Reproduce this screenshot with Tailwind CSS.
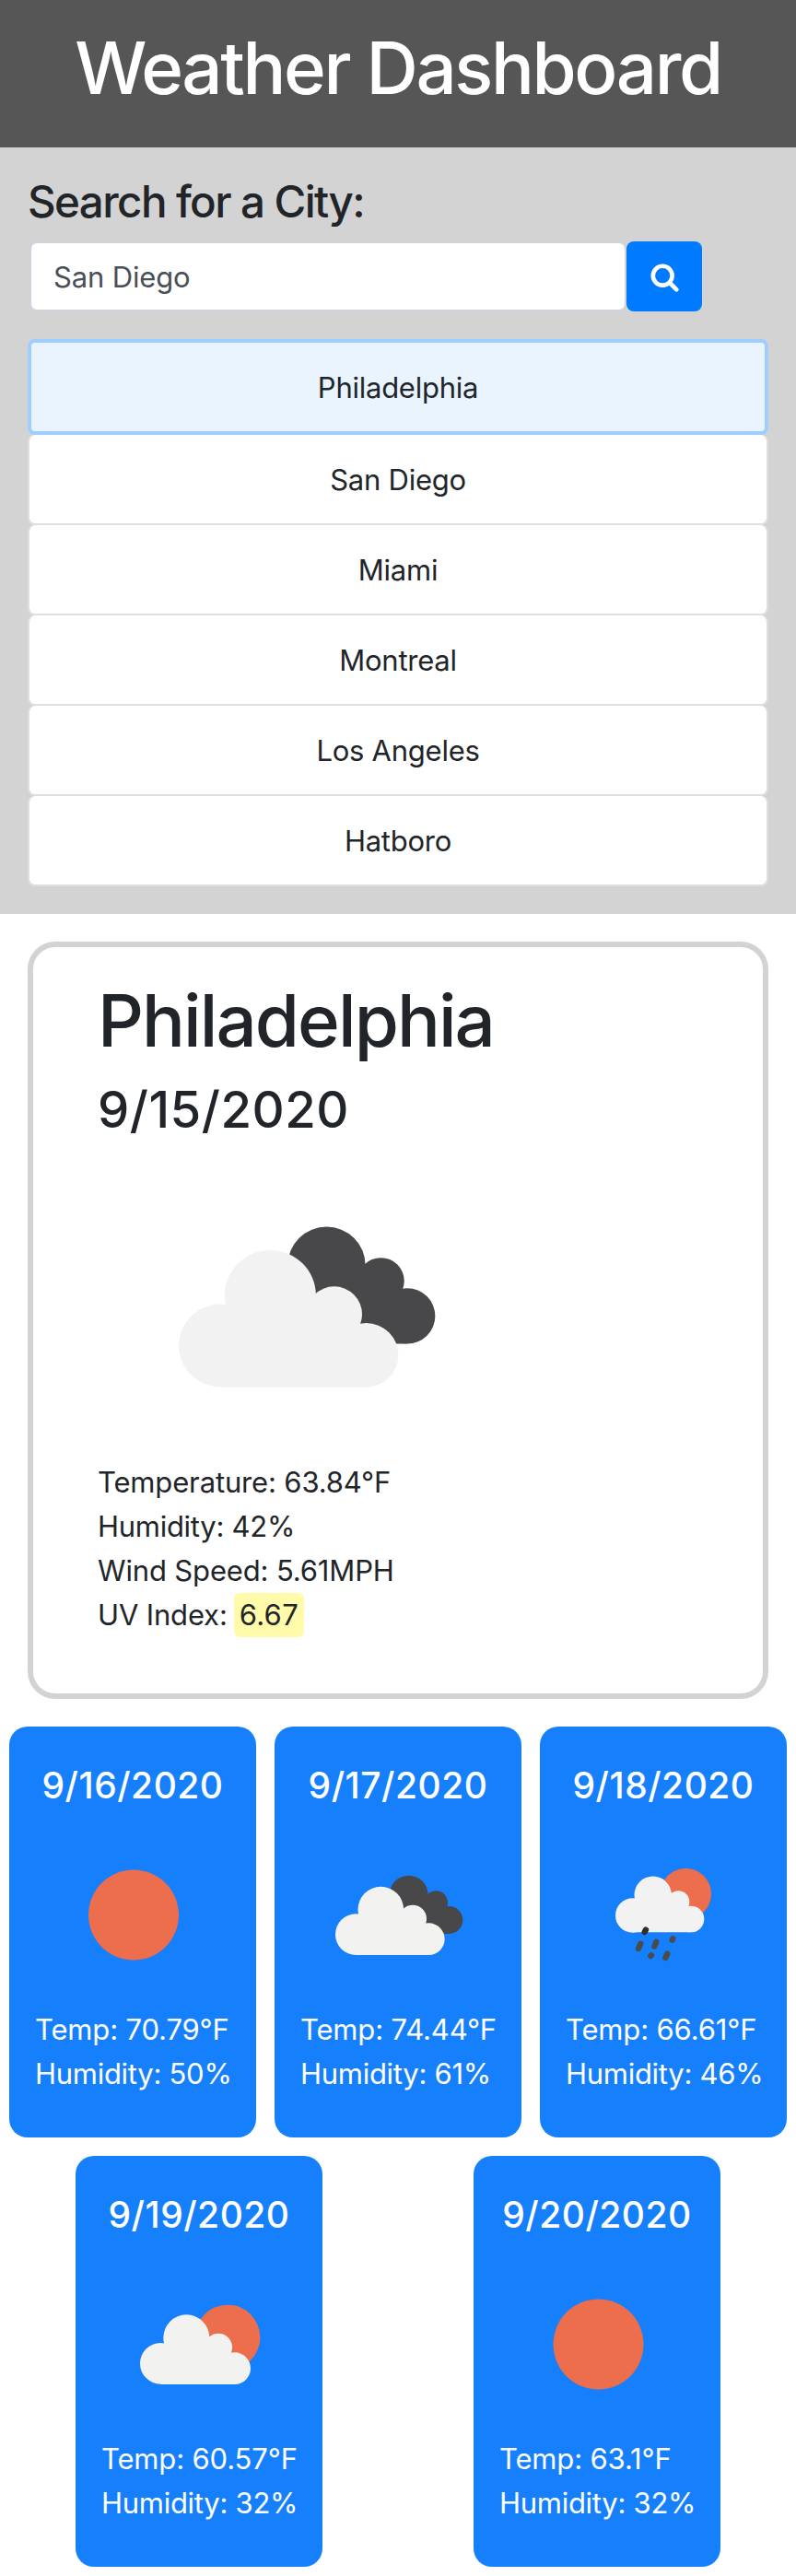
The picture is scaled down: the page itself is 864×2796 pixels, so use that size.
<!DOCTYPE html>
<html lang="en">
<head>
<meta charset="utf-8">
<title>Weather Dashboard</title>
<script src="https://cdn.jsdelivr.net/npm/@tailwindcss/browser@4"></script>
</head>
<body class="bg-white font-['Inter',sans-serif] text-[31px] leading-[48px] tracking-[-0.15px] text-[#212529]">
<header class="h-[160px] bg-[#565656] pt-[26px] text-center">
  <h1 class="text-[78px] leading-[96px] font-medium tracking-[-2.4px] text-white">Weather Dashboard</h1>
</header>

<section class="h-[832px] bg-[#d3d3d3] px-[30px] pt-[30px]">
  <h2 class="text-[47.5px] leading-[58px] font-medium tracking-[-1.6px]">Search for a City:</h2>
  <form class="mt-[14px] flex items-center pl-[2px]" onsubmit="return false">
    <input type="text" value="San Diego" aria-label="City" class="h-[76px] w-[648px] rounded-[8px] border-2 border-[#ced4da] bg-white px-[24px] text-[#495057] outline-none">
    <button type="button" aria-label="Search" class="flex h-[76px] w-[82px] items-center justify-center rounded-[8px] bg-[#007bff] pt-[3px]">
      <svg class="h-[31px] w-[31px]" viewBox="0 0 31 31" fill="none" stroke="#fff"><circle cx="13.200" cy="13.200" r="10.400" stroke-width="4.600"/><path d="M21 21l7.300 7.300" stroke-width="4.600" stroke-linecap="round"/></svg>
    </button>
  </form>
  <ul class="mt-[30px] text-center tracking-[-0.25px]">
    <li class="flex h-[104px] items-center justify-center rounded-[8px] border-4 border-[#a0ccff] bg-[#e9f4ff] pt-px">Philadelphia</li>
    <li class="flex h-[98px] items-center justify-center rounded-[8px] border-x-2 border-b-2 border-[#dfdfdf] bg-white pt-px">San Diego</li>
    <li class="flex h-[98px] items-center justify-center rounded-[8px] border-x-2 border-b-2 border-[#dfdfdf] bg-white pt-px">Miami</li>
    <li class="flex h-[98px] items-center justify-center rounded-[8px] border-x-2 border-b-2 border-[#dfdfdf] bg-white pt-px">Montreal</li>
    <li class="flex h-[98px] items-center justify-center rounded-[8px] border-x-2 border-b-2 border-[#dfdfdf] bg-white pt-px">Los Angeles</li>
    <li class="flex h-[98px] items-center justify-center rounded-[8px] border-x-2 border-b-2 border-[#dfdfdf] bg-white pt-px">Hatboro</li>
  </ul>
</section>

<section class="mx-[30px] mt-[30px] h-[822px] rounded-[30px] border-[6px] border-[#d3d3d3] pt-[32px] pl-[70px]">
  <h2 class="text-[78px] leading-[96px] font-medium tracking-[-1.950px]">Philadelphia</h2>
  <h3 class="mt-[14px] text-[54.5px] leading-[68px] font-medium tracking-[0.5px]">9/15/2020</h3>
  <svg class="mt-[91px] ml-[86px] h-[178px] w-[282px]" viewBox="348 600 512 325" preserveAspectRatio="none">
    <g fill="#48484a"><circle cx="643" cy="681" r="76.500"/><circle cx="750" cy="712" r="46"/><circle cx="802" cy="781.500" r="55"/><path d="M600 690h119l32 20 50 30v96.500H640z"/></g>
    <g fill="#f2f2f2"><circle cx="434" cy="840" r="82"/><circle cx="532" cy="741" r="90"/><circle cx="658" cy="778" r="55"/><circle cx="721" cy="859" r="63.500"/><path d="M434 770L532 730l126 40 55 60 8 92.500H434z"/></g>
  </svg>
  <div class="mt-[78px]">
    <p>Temperature: 63.84°F</p>
    <p class="tracking-[-0.28px]">Humidity: 42%</p>
    <p>Wind Speed: 5.61MPH</p>
    <p class="flex">UV Index:<span class="ml-[7px] h-[48px] rounded-[6px] bg-[#fffbab] px-[6px] tracking-[0.3px]">6.67</span></p>
  </div>
</section>

<section class="mt-[30px] text-white">
  <div class="grid grid-cols-3">
    <article class="mx-auto h-[446px] w-[268px] rounded-[20px] bg-[#167ffc] pt-[40px]">
      <h4 class="text-center text-[39px] font-medium tracking-[0.5px]">9/16/2020</h4>
      <svg class="h-[217px] w-[268px]" viewBox="0 0 268 217"><circle cx="135" cy="116.500" r="49" fill="#ec6e4c"/></svg>
      <div class="pl-[28px]"><p>Temp: 70.79°F</p><p class="tracking-[-0.28px]">Humidity: 50%</p></div>
    </article>
    <article class="mx-auto h-[446px] w-[268px] rounded-[20px] bg-[#167ffc] pt-[40px]">
      <h4 class="text-center text-[39px] font-medium tracking-[0.5px]">9/17/2020</h4>
      <svg class="h-[217px] w-[268px]" viewBox="0 0 268 217"><g transform="translate(42 38) scale(.33333)">
        <g fill="#48484a"><circle cx="311" cy="170" r="63"/><circle cx="400" cy="195" r="38"/><circle cx="442" cy="252" r="45"/><path d="M275 175h99l30 18 38 25v79H310z"/></g>
        <g fill="#f2f2f0"><circle cx="139" cy="299" r="67"/><circle cx="220" cy="218" r="74.500"/><circle cx="324" cy="248" r="45"/><circle cx="376" cy="314" r="52"/><path d="M139 242l81-30 104 30 45 50 7 74H139z"/></g></g></svg>
      <div class="pl-[28px]"><p>Temp: 74.44°F</p><p class="tracking-[-0.28px]">Humidity: 61%</p></div>
    </article>
    <article class="mx-auto h-[446px] w-[268px] rounded-[20px] bg-[#167ffc] pt-[40px]">
      <h4 class="text-center text-[39px] font-medium tracking-[0.5px]">9/18/2020</h4>
      <svg class="h-[217px] w-[268px]" viewBox="0 0 268 217"><g transform="translate(74 38) scale(.33333)">
        <circle cx="253" cy="167" r="83" fill="#ec6e4c"/>
        <g fill="#f2f2f2"><circle cx="80" cy="237" r="56"/><circle cx="146" cy="170" r="60.500"/><circle cx="229" cy="193" r="36"/><circle cx="270" cy="249" r="43"/><path d="M80 190l66-25 83 25 36 40 5 62H80z"/></g>
        <g stroke="#4b4b4d" stroke-width="19" stroke-linecap="round"><path d="M119 291l4-7" stroke="#2e2e2f"/><path d="M99 345l7-16M151 338l6-15M139 369l2-2M209 317l2-4M187 375l6-13"/></g></g></svg>
      <div class="pl-[28px]"><p>Temp: 66.61°F</p><p class="tracking-[-0.28px]">Humidity: 46%</p></div>
    </article>
  </div>
  <div class="mt-[20px] grid grid-cols-2">
    <article class="mx-auto h-[446px] w-[268px] rounded-[20px] bg-[#167ffc] pt-[40px]">
      <h4 class="text-center text-[39px] font-medium tracking-[0.5px]">9/19/2020</h4>
      <svg class="h-[217px] w-[268px]" viewBox="0 0 268 217"><g transform="translate(48 42) scale(.33333)">
        <circle cx="351" cy="201" r="106" fill="#ec6e4c"/>
        <g fill="#f2f2f0"><circle cx="133" cy="286" r="67"/><circle cx="217" cy="202" r="75"/><circle cx="321" cy="233" r="45"/><circle cx="374" cy="302" r="52"/><path d="M133 230l84-30 104 30 44 50 9 74H133z"/></g></g></svg>
      <div class="pl-[28px]"><p>Temp: 60.57°F</p><p class="tracking-[-0.28px]">Humidity: 32%</p></div>
    </article>
    <article class="mx-auto h-[446px] w-[268px] rounded-[20px] bg-[#167ffc] pt-[40px]">
      <h4 class="text-center text-[39px] font-medium tracking-[0.5px]">9/20/2020</h4>
      <svg class="h-[217px] w-[268px]" viewBox="0 0 268 217"><circle cx="135.500" cy="116.500" r="49" fill="#ec6e4c"/></svg>
      <div class="pl-[28px]"><p>Temp: 63.1°F</p><p class="tracking-[-0.28px]">Humidity: 32%</p></div>
    </article>
  </div>
</section>
</body>
</html>
